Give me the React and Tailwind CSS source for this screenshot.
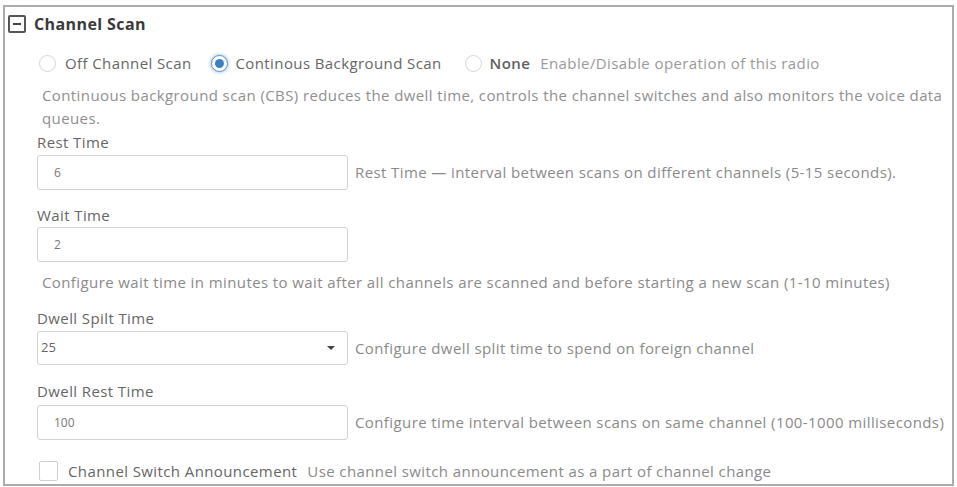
import React from "react";

function Radio({ checked }) {
  if (checked) {
    return (
      <span className="flex h-[17px] w-[17px] shrink-0 items-center justify-center rounded-full border border-[#5b95cf] bg-white shadow-[0_0_3px_1px_rgba(91,149,207,0.45)]">
        <span className="block h-[9px] w-[9px] rounded-full bg-[#3d7fc0]" />
      </span>
    );
  }
  return <span className="block h-[17px] w-[17px] shrink-0 rounded-full border border-[#d6d6d6] bg-white" />;
}

function Field({ label, value, helper, mtLabel, mtInput, select }) {
  return (
    <div className="pl-[32px]">
      <div className={`${mtLabel} h-[20px] text-[15px] leading-[20px] tracking-[0.4px] text-[#666]`}>{label}</div>
      <div className={`${mtInput} flex items-center`}>
        {select ? (
          <div className="flex h-[34px] w-[311px] shrink-0 items-center justify-between rounded-[3px] border border-[#d2d2d2] bg-white pl-[3px] pr-[12px] text-[13px] text-[#666]">
            <span>{value}</span>
            <svg width="8" height="4" viewBox="0 0 8 4">
              <path d="M0 0 L8 0 L4 4 Z" fill="#444" />
            </svg>
          </div>
        ) : (
          <div className="flex h-[35px] w-[311px] shrink-0 items-center rounded-[3px] border border-[#d2d2d2] bg-white pl-[16px] text-[12px] text-[#777]">
            {value}
          </div>
        )}
        {helper && (
          <span className="ml-[7px] whitespace-nowrap text-[15px] tracking-[0.4px] text-[#8a8a8a]">{helper}</span>
        )}
      </div>
    </div>
  );
}

export default function App() {
  return (
    <div
      className="h-[487px] w-[957px] bg-white pl-[3px] pt-[5px]"
      style={{ fontFamily: '"Open Sans", "Liberation Sans", sans-serif' }}
    >
      <div className="h-[481px] w-[951px] overflow-hidden border-2 border-[#acacac] bg-white">
        {/* Header */}
        <div className="mt-[8px] flex h-[18px] items-center pl-[3px]">
          <span className="flex h-[18px] w-[18px] items-center justify-center rounded-[2px] border-2 border-[#555]">
            <span className="block h-[2px] w-[8px] bg-[#444]" />
          </span>
          <span className="ml-[8px] text-[16px] font-bold tracking-[0.4px] text-[#3a3a3a]">Channel Scan</span>
        </div>

        {/* Radios */}
        <div className="mt-[19px] flex h-[22px] items-center whitespace-nowrap pl-[34px] text-[15px] tracking-[0.4px] text-[#666]">
          <Radio />
          <span className="ml-[9px]">Off Channel Scan</span>
          <span className="ml-[19px] flex">
            <Radio checked />
          </span>
          <span className="ml-[8px]">Continous Background Scan</span>
          <span className="ml-[23px] flex">
            <Radio />
          </span>
          <span className="ml-[8px] font-semibold text-[#606060]">None</span>
          <span className="ml-[10px] text-[15px] text-[#9a9a9a]">Enable/Disable operation of this radio</span>
        </div>

        {/* Description */}
        <div className="mt-[10px] whitespace-nowrap pl-[37px] text-[15px] leading-[23px] tracking-[0.4px] text-[#8f8f8f]">
          Continuous background scan (CBS) reduces the dwell time, controls the channel switches and also monitors the voice data
          <br />
          queues.
        </div>

        <Field
          label="Rest Time"
          value="6"
          helper="Rest Time — interval between scans on different channels (5-15 seconds)."
          mtLabel="mt-[2px]"
          mtInput="mt-[3px]"
        />
        <Field label="Wait Time" value="2" mtLabel="mt-[15px]" mtInput="mt-[2px]" />
        <div className="mt-[10px] h-[20px] whitespace-nowrap pl-[37px] text-[15px] leading-[20px] tracking-[0.4px] text-[#8a8a8a]">
          Configure wait time in minutes to wait after all channels are scanned and before starting a new scan (1-10 minutes)
        </div>
        <Field
          label="Dwell Spilt Time"
          value="25"
          helper="Configure dwell split time to spend on foreign channel"
          mtLabel="mt-[16px]"
          mtInput="mt-[3px]"
          select
        />
        <Field
          label="Dwell Rest Time"
          value="100"
          helper="Configure time interval between scans on same channel (100-1000 milliseconds)"
          mtLabel="mt-[16px]"
          mtInput="mt-[4px]"
        />

        {/* Checkbox */}
        <div className="mt-[20px] flex items-center whitespace-nowrap pl-[34px]">
          <span className="block h-[20px] w-[19px] shrink-0 rounded-[2px] border border-[#cfcfcf] bg-white" />
          <span className="ml-[10px] text-[15px] tracking-[0.4px] text-[#666]">Channel Switch Announcement</span>
          <span className="ml-[10px] text-[15px] tracking-[0.4px] text-[#8a8a8a]">
            Use channel switch announcement as a part of channel change
          </span>
        </div>
      </div>
    </div>
  );
}
